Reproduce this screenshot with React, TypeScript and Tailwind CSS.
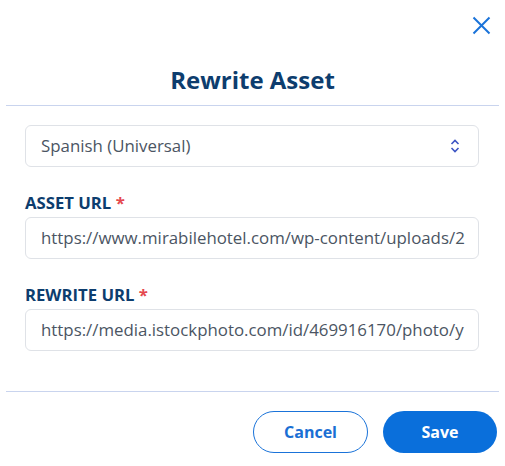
function Label({ children }: { children: string }) {
  return (
    <label className="mb-[3px] block text-[16.7px] leading-[23px] font-bold text-[#0d3d6e]">
      {children} <span className="text-[#e5484d]">*</span>
    </label>
  )
}

function ChevronsUpDown() {
  return (
    <svg width="10" height="14" viewBox="0 0 10 14" fill="none" stroke="#3d55c4" strokeWidth="1.6">
      <path d="M1.5 5 L5 1.5 L8.5 5" />
      <path d="M1.5 9 L5 12.5 L8.5 9" />
    </svg>
  )
}

function CloseIcon() {
  return (
    <svg width="19" height="19" viewBox="0 0 19 19" fill="none" stroke="#1a73d9" strokeWidth="2">
      <path d="M1.5 1.5 L17.5 17.5 M17.5 1.5 L1.5 17.5" />
    </svg>
  )
}

const field =
  "flex h-[42px] items-center overflow-hidden rounded-[6px] border border-[#dfe2e7] px-[15px] text-[16.85px] whitespace-nowrap text-[#4b5563]"

export default function App() {
  return (
    <div className="h-[466px] w-[505px] bg-white font-['Open_Sans',sans-serif]">
      <div className="flex h-[51px] items-start justify-end pt-[16px] pr-[14px]">
        <button>
          <CloseIcon />
        </button>
      </div>
      <h2 className="mt-[13px] text-center text-[24px] leading-[32px] font-bold text-[#0d3d6e]">
        Rewrite Asset
      </h2>
      <hr className="mx-[6px] mt-[9px] border-[#c9d4ee]" />

      <div className="flex flex-col pt-[19px] pr-[26px] pl-[25px]">
        <div className={field + " justify-between pr-[18px]"}>
          <span>Spanish (Universal)</span>
          <ChevronsUpDown />
        </div>

        <div className="mt-[24px]">
          <Label>ASSET URL</Label>
          <div className={field}>https://www.mirabilehotel.com/wp-content/uploads/2</div>
        </div>

        <div className="mt-[24px]">
          <Label>REWRITE URL</Label>
          <div className={field}>https://media.istockphoto.com/id/469916170/photo/y</div>
        </div>
      </div>

      <hr className="mx-[6px] mt-[40px] border-[#c9d4ee]" />

      <div className="flex justify-end gap-[15px] pt-[19px] pr-[8px]">
        <button className="h-[42px] w-[115px] rounded-full border border-[#1a73d9] text-[16px] font-bold text-[#1a6fd4]">
          Cancel
        </button>
        <button className="h-[42px] w-[114px] rounded-full bg-[#0a6fdb] text-[16px] font-bold text-white">
          Save
        </button>
      </div>
    </div>
  )
}
